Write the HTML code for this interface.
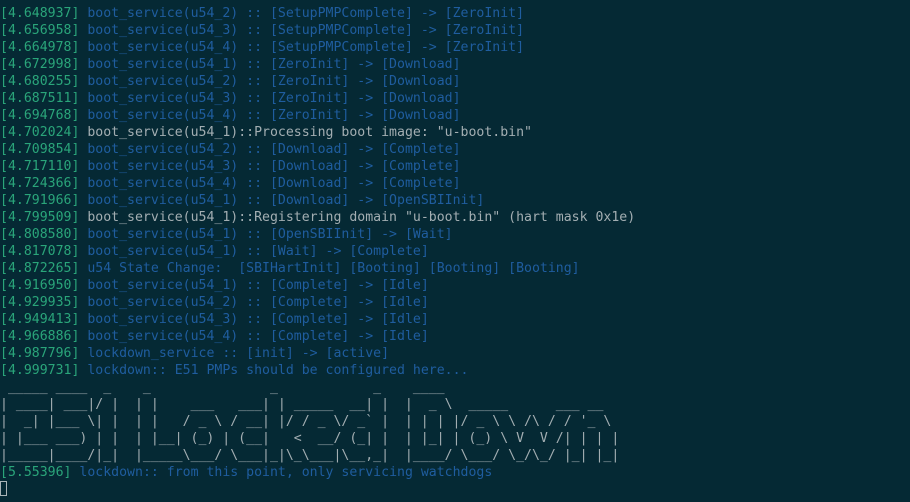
<!DOCTYPE html>
<html><head><meta charset="utf-8"><style>
html,body{margin:0;padding:0;background:#052934;width:910px;height:502px;overflow:hidden}
pre{margin:0;position:absolute;left:0;top:5px;font-family:"DejaVu Sans Mono","Liberation Mono",monospace;font-size:13.2px;line-height:17px;color:#a3aeb2;white-space:pre}
.g{color:#2aa57a}.b{color:#1f5d9f}.w{color:#a3aeb2}
.cur{display:inline-block;width:7px;height:15px;border:1px solid #a9b4b8;vertical-align:-3px;box-sizing:border-box}
</style></head><body><pre><span class="g">[4.648937]</span> <span class="b">boot_service(u54_2) :: [SetupPMPComplete] -&gt; [ZeroInit]</span>
<span class="g">[4.656958]</span> <span class="b">boot_service(u54_3) :: [SetupPMPComplete] -&gt; [ZeroInit]</span>
<span class="g">[4.664978]</span> <span class="b">boot_service(u54_4) :: [SetupPMPComplete] -&gt; [ZeroInit]</span>
<span class="g">[4.672998]</span> <span class="b">boot_service(u54_1) :: [ZeroInit] -&gt; [Download]</span>
<span class="g">[4.680255]</span> <span class="b">boot_service(u54_2) :: [ZeroInit] -&gt; [Download]</span>
<span class="g">[4.687511]</span> <span class="b">boot_service(u54_3) :: [ZeroInit] -&gt; [Download]</span>
<span class="g">[4.694768]</span> <span class="b">boot_service(u54_4) :: [ZeroInit] -&gt; [Download]</span>
<span class="g">[4.702024]</span> <span class="w">boot_service(u54_1)::Processing boot image: "u-boot.bin"</span>
<span class="g">[4.709854]</span> <span class="b">boot_service(u54_2) :: [Download] -&gt; [Complete]</span>
<span class="g">[4.717110]</span> <span class="b">boot_service(u54_3) :: [Download] -&gt; [Complete]</span>
<span class="g">[4.724366]</span> <span class="b">boot_service(u54_4) :: [Download] -&gt; [Complete]</span>
<span class="g">[4.791966]</span> <span class="b">boot_service(u54_1) :: [Download] -&gt; [OpenSBIInit]</span>
<span class="g">[4.799509]</span> <span class="w">boot_service(u54_1)::Registering domain "u-boot.bin" (hart mask 0x1e)</span>
<span class="g">[4.808580]</span> <span class="b">boot_service(u54_1) :: [OpenSBIInit] -&gt; [Wait]</span>
<span class="g">[4.817078]</span> <span class="b">boot_service(u54_1) :: [Wait] -&gt; [Complete]</span>
<span class="g">[4.872265]</span> <span class="b">u54 State Change:  [SBIHartInit] [Booting] [Booting] [Booting]</span>
<span class="g">[4.916950]</span> <span class="b">boot_service(u54_1) :: [Complete] -&gt; [Idle]</span>
<span class="g">[4.929935]</span> <span class="b">boot_service(u54_2) :: [Complete] -&gt; [Idle]</span>
<span class="g">[4.949413]</span> <span class="b">boot_service(u54_3) :: [Complete] -&gt; [Idle]</span>
<span class="g">[4.966886]</span> <span class="b">boot_service(u54_4) :: [Complete] -&gt; [Idle]</span>
<span class="g">[4.987796]</span> <span class="b">lockdown_service :: [init] -&gt; [active]</span>
<span class="g">[4.999731]</span> <span class="b">lockdown:: E51 PMPs should be configured here...</span>
 _____ ____  _    _               _            _    ____
| ____| ___|/ |  | |    ___   ___| | _____  __| |  |  _ \  _____      ___ __
|  _| |___ \| |  | |   / _ \ / __| |/ / _ \/ _` |  | | | |/ _ \ \ /\ / / '_ \
| |___ ___) | |  | |__| (_) | (__|   &lt;  __/ (_| |  | |_| | (_) \ V  V /| | | |
|_____|____/|_|  |_____\___/ \___|_|\_\___|\__,_|  |____/ \___/ \_/\_/ |_| |_|
<span class="g">[5.55396]</span> <span class="b">lockdown:: from this point, only servicing watchdogs</span>
<span class="cur"></span></pre></body></html>
